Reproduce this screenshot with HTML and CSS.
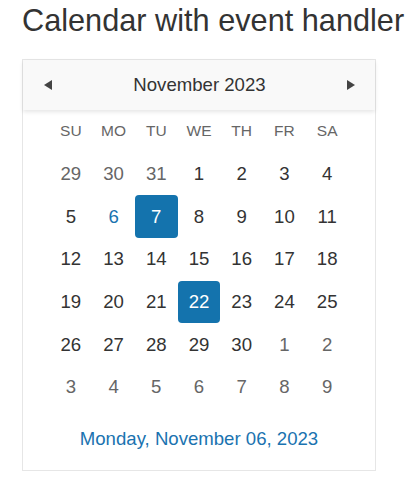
FILE: index.html
```html
<!DOCTYPE html>
<html lang="en">
<head>
    <meta charset="UTF-8">
    <meta name="viewport" content="width=device-width, initial-scale=1.0">
    <title>Calendar with event handler</title>
    <link rel="stylesheet" href="styles.css">
</head>
<body>
    <h1 class="title">Calendar with event handler</h1>
    <div class="calendar">
        <div class="cal-header">
            <span class="nav prev"></span>
            <span class="month">November 2023</span>
            <span class="nav next"></span>
        </div>
        <div class="grid">
            <div class="dow">SU</div>
            <div class="dow">MO</div>
            <div class="dow">TU</div>
            <div class="dow">WE</div>
            <div class="dow">TH</div>
            <div class="dow">FR</div>
            <div class="dow">SA</div>

            <div class="day other">29</div>
            <div class="day other">30</div>
            <div class="day other">31</div>
            <div class="day">1</div>
            <div class="day">2</div>
            <div class="day">3</div>
            <div class="day">4</div>

            <div class="day">5</div>
            <div class="day today">6</div>
            <div class="day selected">7</div>
            <div class="day">8</div>
            <div class="day">9</div>
            <div class="day">10</div>
            <div class="day">11</div>

            <div class="day">12</div>
            <div class="day">13</div>
            <div class="day">14</div>
            <div class="day">15</div>
            <div class="day">16</div>
            <div class="day">17</div>
            <div class="day">18</div>

            <div class="day">19</div>
            <div class="day">20</div>
            <div class="day">21</div>
            <div class="day selected">22</div>
            <div class="day">23</div>
            <div class="day">24</div>
            <div class="day">25</div>

            <div class="day">26</div>
            <div class="day">27</div>
            <div class="day">28</div>
            <div class="day">29</div>
            <div class="day">30</div>
            <div class="day other">1</div>
            <div class="day other">2</div>

            <div class="day other">3</div>
            <div class="day other">4</div>
            <div class="day other">5</div>
            <div class="day other">6</div>
            <div class="day other">7</div>
            <div class="day other">8</div>
            <div class="day other">9</div>
        </div>
        <div class="cal-footer">Monday, November 06, 2023</div>
    </div>
</body>
</html>
```

FILE: styles.css
```css
body {
    font-family: "Liberation Sans", Arial, sans-serif;
    color: #333;
    background-color: #fff;
    margin: 0;
    padding: 0 0 0 22px;
}
.title {
    font-size: 30.7px;
    font-weight: normal;
    line-height: 34px;
    margin: 4px 0 21px 0;
}
.calendar {
    width: 352px;
    border: 1px solid #e6e6e6;
}
.cal-header {
    height: 50px;
    display: flex;
    align-items: center;
    justify-content: space-between;
    padding: 0 20px 0 21px;
    background-color: #f9f9f9;
    box-shadow: 0 2px 4px rgba(0, 0, 0, 0.1);
    position: relative;
}
.month {
    font-size: 18.6px;
    color: #333;
}
.nav {
    width: 0;
    height: 0;
    border-top: 5.5px solid transparent;
    border-bottom: 5.5px solid transparent;
}
.prev {
    border-right: 8px solid #444;
}
.next {
    border-left: 8px solid #444;
}
.grid {
    width: 299px;
    margin: 0 auto;
    display: grid;
    grid-template-columns: repeat(7, 1fr);
    grid-auto-rows: 42.7px;
}
.dow, .day {
    display: flex;
    align-items: center;
    justify-content: center;
}
.dow {
    font-size: 15.5px;
    color: #666;
}
.day {
    font-size: 18.6px;
    color: #333;
    border-radius: 4px;
}
.day.other {
    color: #666;
}
.day.today {
    color: #1a73b0;
}
.day.selected {
    background-color: #1473ad;
    color: #fff;
}
.cal-footer {
    height: 61px;
    display: flex;
    align-items: center;
    justify-content: center;
    font-size: 18.6px;
    color: #1a73b0;
}
```
